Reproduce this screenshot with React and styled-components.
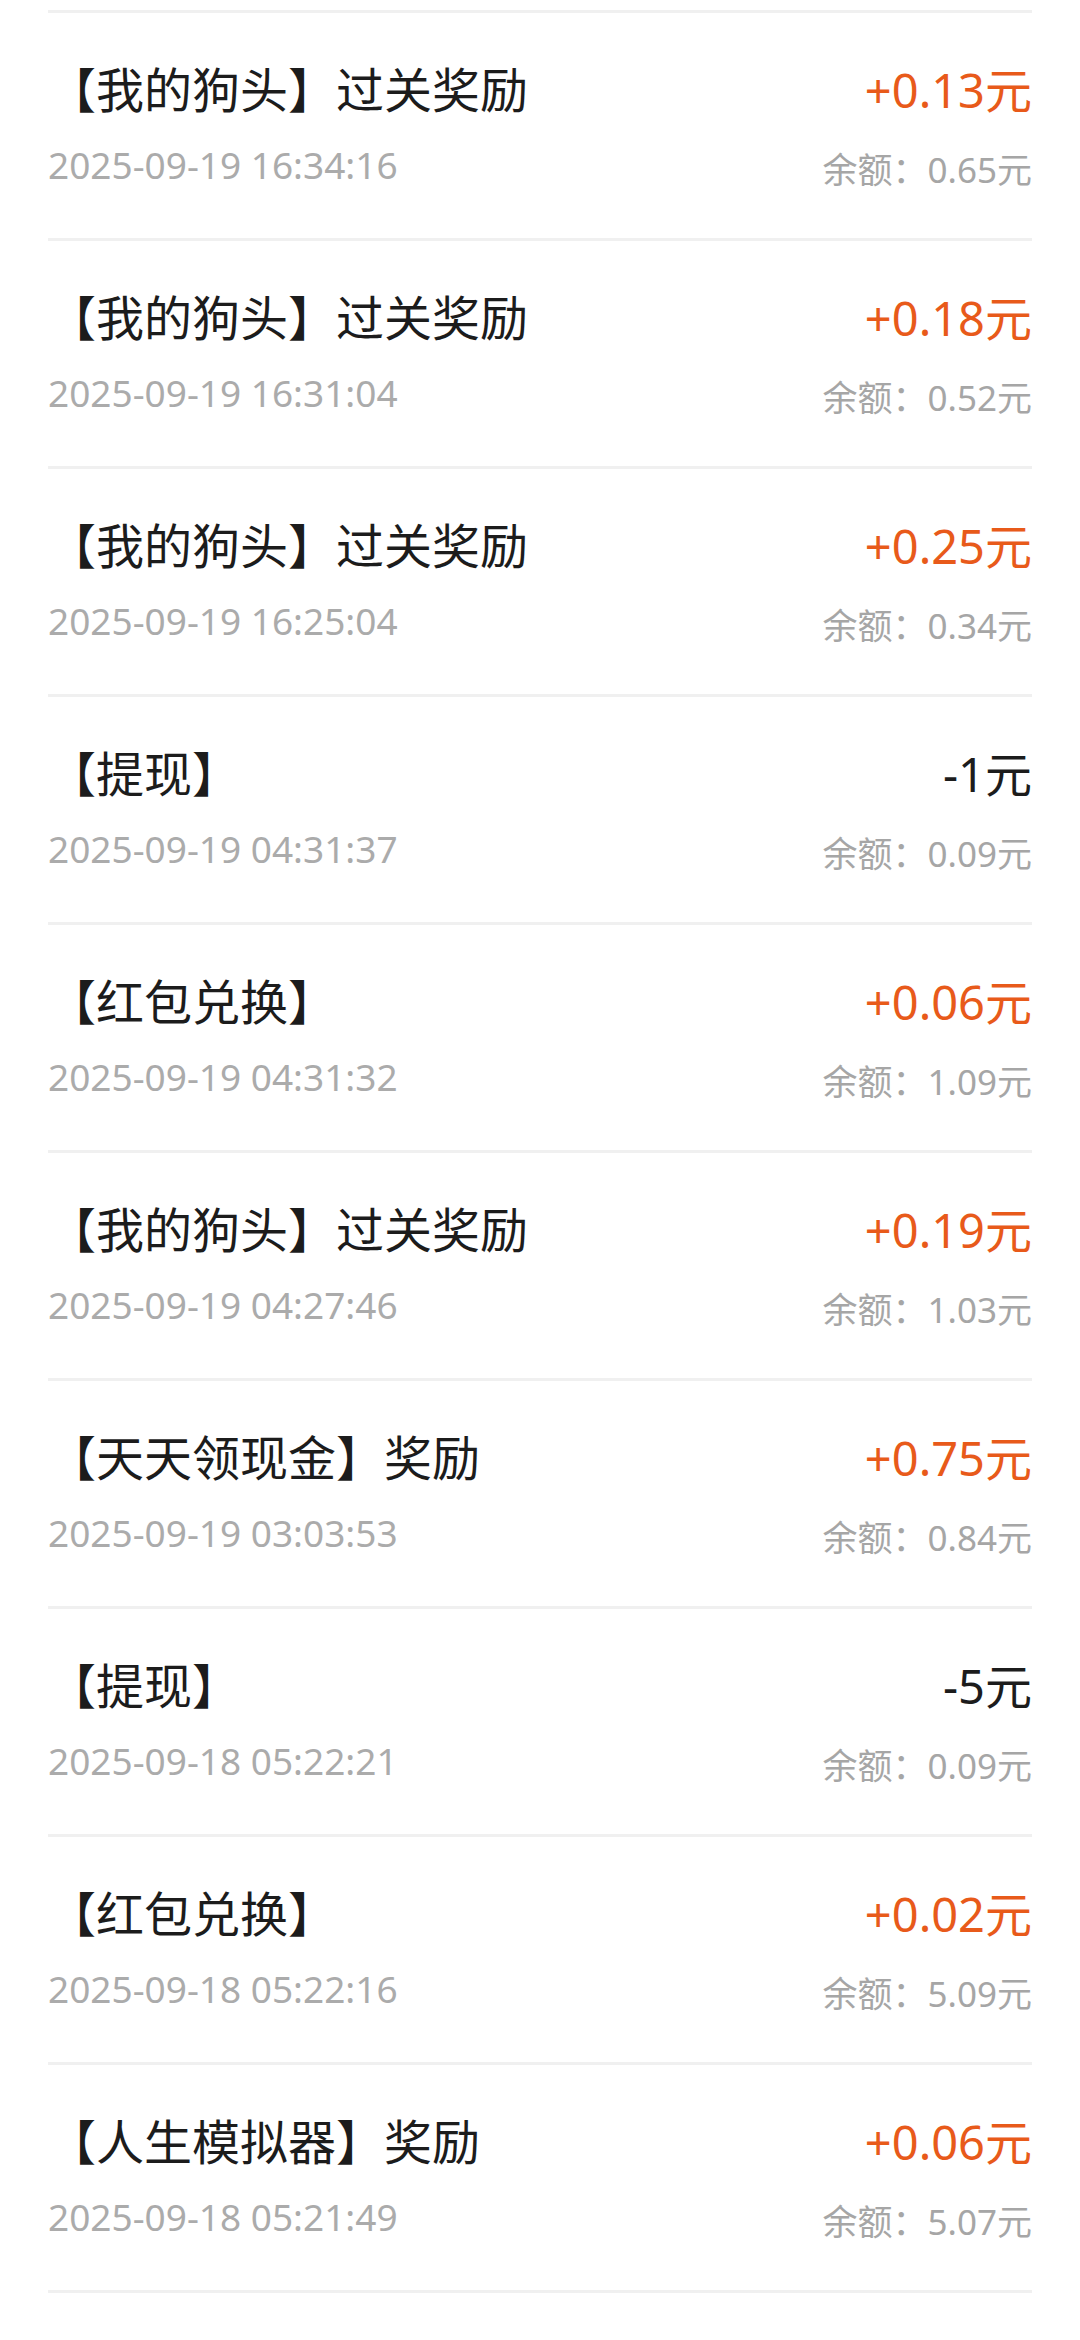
import React from 'react';
import styled, { createGlobalStyle } from 'styled-components';

const GlobalStyle = createGlobalStyle`
  html, body {
    margin: 0;
    padding: 0;
    background: #ffffff;
  }
  body {
    font-family: "Noto Sans", "Noto Sans CJK SC", sans-serif;
  }
`;

const List = styled.div`
  margin: 10px 48px 0;
  border-top: 3px solid #f0f0f0;
`;

const Row = styled.div`
  height: 225px;
  display: flex;
  justify-content: space-between;
  align-items: flex-start;
  border-bottom: 3px solid #f0f0f0;
  box-sizing: content-box;
`;

const Left = styled.div`
  display: flex;
  flex-direction: column;
  padding-top: 47px;
`;

const Right = styled.div`
  display: flex;
  flex-direction: column;
  align-items: flex-end;
  padding-top: 47px;
`;

const Title = styled.div`
  font-size: 48px;
  line-height: 60px;
  color: #1c1c1c;
  white-space: nowrap;
`;

const Time = styled.div`
  margin-top: 23px;
  font-size: 37px;
  line-height: 44px;
  color: #ababab;
  white-space: nowrap;
`;

const Amount = styled.div`
  font-size: 47px;
  line-height: 60px;
  color: ${(p) => (p.$negative ? '#1c1c1c' : '#e85a1a')};
  white-space: nowrap;
`;

const Balance = styled.div`
  margin-top: 28px;
  font-size: 35px;
  line-height: 44px;
  color: #a6a6a6;
  white-space: nowrap;
`;

const records = [
  { title: '【我的狗头】过关奖励', time: '2025-09-19 16:34:16', amount: '+0.13元', balance: '0.65元' },
  { title: '【我的狗头】过关奖励', time: '2025-09-19 16:31:04', amount: '+0.18元', balance: '0.52元' },
  { title: '【我的狗头】过关奖励', time: '2025-09-19 16:25:04', amount: '+0.25元', balance: '0.34元' },
  { title: '【提现】', time: '2025-09-19 04:31:37', amount: '-1元', balance: '0.09元' },
  { title: '【红包兑换】', time: '2025-09-19 04:31:32', amount: '+0.06元', balance: '1.09元' },
  { title: '【我的狗头】过关奖励', time: '2025-09-19 04:27:46', amount: '+0.19元', balance: '1.03元' },
  { title: '【天天领现金】奖励', time: '2025-09-19 03:03:53', amount: '+0.75元', balance: '0.84元' },
  { title: '【提现】', time: '2025-09-18 05:22:21', amount: '-5元', balance: '0.09元' },
  { title: '【红包兑换】', time: '2025-09-18 05:22:16', amount: '+0.02元', balance: '5.09元' },
  { title: '【人生模拟器】奖励', time: '2025-09-18 05:21:49', amount: '+0.06元', balance: '5.07元' },
];

export default function App() {
  return (
    <>
      <GlobalStyle />
      <List>
        {records.map((item, index) => (
          <Row key={index}>
            <Left>
              <Title>{item.title}</Title>
              <Time>{item.time}</Time>
            </Left>
            <Right>
              <Amount $negative={item.amount.startsWith('-')}>{item.amount}</Amount>
              <Balance>余额：{item.balance}</Balance>
            </Right>
          </Row>
        ))}
      </List>
    </>
  );
}
